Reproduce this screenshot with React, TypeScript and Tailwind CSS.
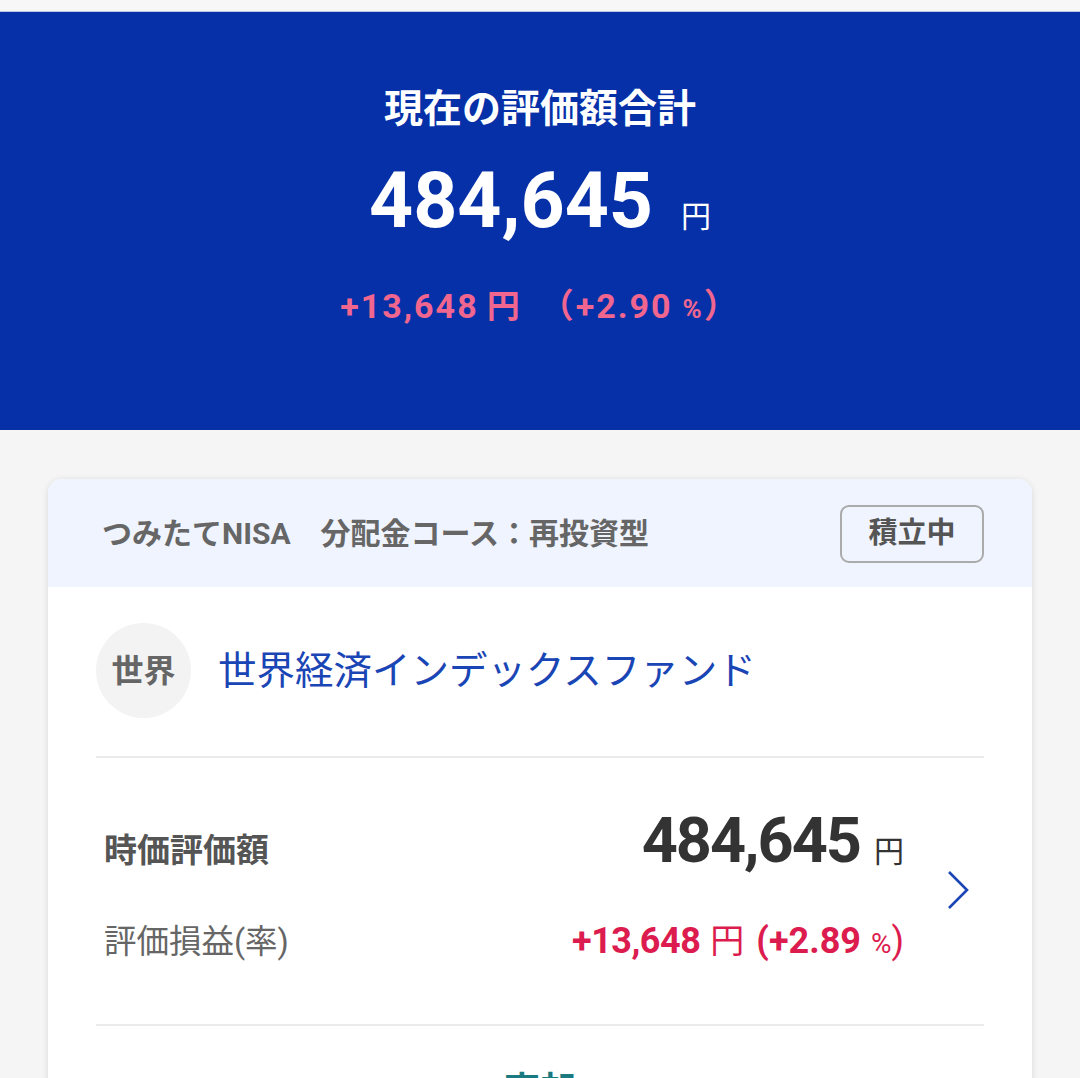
const font = { fontFamily: 'Roboto, "Noto Sans CJK JP", sans-serif' };

export default function App() {
    return (
        <div className="w-[1080px] h-[1078px] overflow-hidden bg-[#f5f5f5]" style={font}>
            {/* Top strip */}
            <div className="h-[12px] bg-[#f7f7f7] border-b border-[#b9c6e6]" />

            {/* Summary */}
            <div className="h-[418px] bg-[#0530a8] flex flex-col items-center pt-[73px]">
                <h1 className="text-[39px] leading-[48px] font-bold text-white">現在の評価額合計</h1>
                <div className="mt-[28px] flex items-baseline text-white">
                    <span className="text-[77px] leading-[80px] font-bold">484,645</span>
                    <span className="ml-[28px] text-[30px]">円</span>
                </div>
                <div className="mt-[45px] text-[34px] leading-[40px] font-bold text-[#f0668f] flex items-baseline tracking-[2px]">
                    <span>+13,648</span>
                    <span className="ml-[8px] text-[33px]">円</span>
                    <span className="ml-[18px]">（+2.90</span>
                    <span className="ml-[10px] text-[26px]">%</span>
                    <span>）</span>
                </div>
            </div>

            {/* Fund card */}
            <div className="mx-[48px] mt-[49px] bg-white rounded-[14px] shadow-[0_1px_6px_rgba(0,0,0,0.12)] overflow-hidden">
                <div className="h-[108px] bg-[#eff4fe] flex items-center justify-between pl-[54px] pr-[48px]">
                    <span className="text-[30px] font-bold text-[#666]">つみたてNISA　分配金コース：再投資型</span>
                    <span className="w-[144px] h-[58px] mt-[2px] border-2 border-[#ababab] rounded-[9px] flex items-center justify-center text-[29px] font-bold text-[#555]">積立中</span>
                </div>

                <div className="mx-[48px]">
                    <div className="flex items-center gap-[27px] pt-[36px] pb-[38px] border-b-2 border-[#ebebeb]">
                        <div className="w-[95px] h-[95px] rounded-full bg-[#f3f3f3] flex items-center justify-center text-[32px] font-bold text-[#666]">世界</div>
                        <span className="text-[38.5px] text-[#1a45b5]">世界経済インデックスファンド</span>
                    </div>

                    <div className="flex items-center h-[268px] pb-[20px] border-b-2 border-[#ebebeb]">
                        <div className="flex-1 flex flex-col">
                            <div className="flex items-baseline justify-between pl-[8px]">
                                <span className="text-[33px] font-bold text-[#555]">時価評価額</span>
                                <div className="flex items-baseline text-[#333]">
                                    <span className="text-[63px] font-bold tracking-[-2px]">484,645</span>
                                    <span className="ml-[14px] text-[30px]">円</span>
                                </div>
                            </div>
                            <div className="mt-[26px] flex items-baseline justify-between pl-[8px]">
                                <span className="text-[32.5px] text-[#666]">評価損益(率)</span>
                                <div className="flex items-baseline text-[#dc1c4e] text-[36px] font-bold">
                                    <span className="tracking-[-0.5px]">+13,648</span>
                                    <span className="ml-[10px] font-normal text-[34px]">円</span>
                                    <span className="ml-[12px]">(+2.89</span>
                                    <span className="ml-[10px] text-[28px] font-normal">%</span>
                                    <span className="font-normal">)</span>
                                </div>
                            </div>
                        </div>
                        <svg className="ml-[42px] mr-[12px] mt-[18px]" width="26" height="40" viewBox="0 0 26 40" fill="none">
                            <polyline points="3,2 21,20 3,38" stroke="#1a45b5" strokeWidth="2.6" strokeLinejoin="miter" />
                        </svg>
                    </div>

                    <div className="pt-[38px] text-center text-[36px] font-bold text-[#1a7a80]">売却</div>
                </div>
            </div>
        </div>
    );
}
